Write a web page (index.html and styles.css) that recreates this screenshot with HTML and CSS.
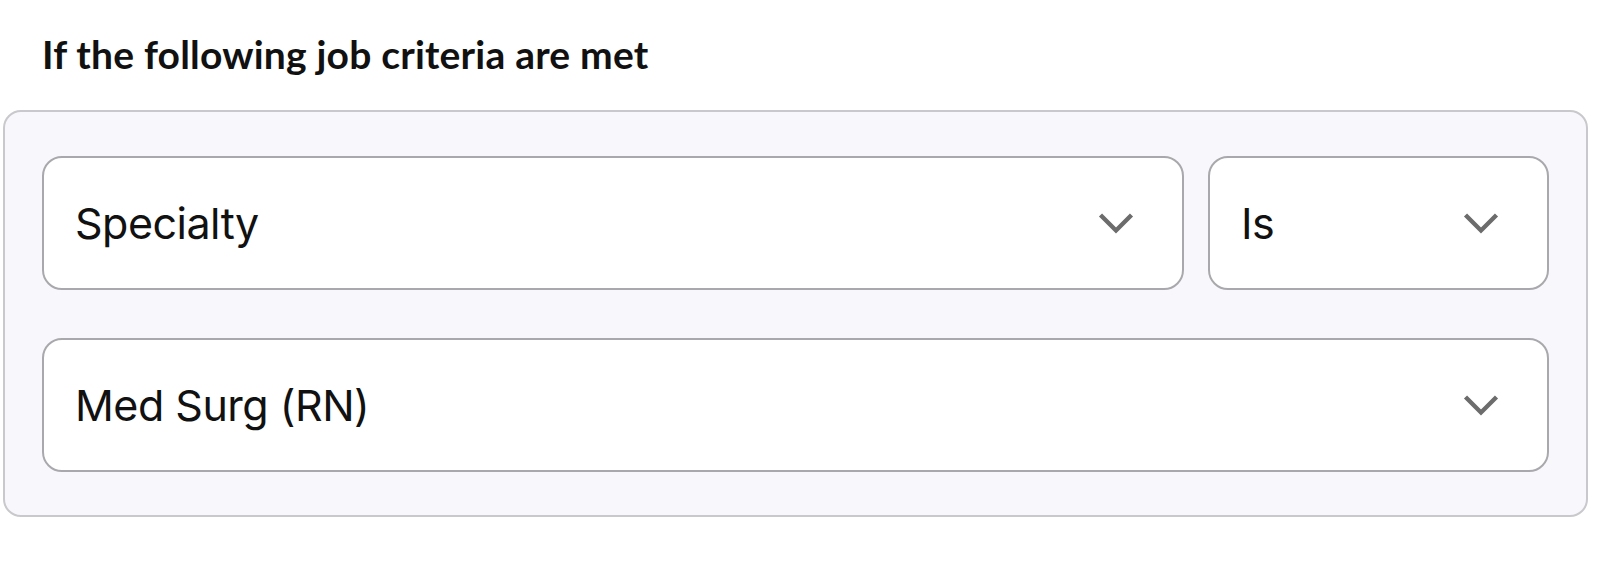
FILE: index.html
```html
<!DOCTYPE html>
<html lang="en">
<head>
<meta charset="utf-8">
<title>Job criteria</title>
<link rel="stylesheet" href="styles.css">
</head>
<body>
<div class="page">
  <h2 class="heading">If the following job criteria are met</h2>
  <div class="panel">
    <div class="row">
      <div class="select grow">
        <span class="value">Specialty</span>
        <svg class="chev" width="36" height="22" viewBox="0 0 36 22"><polyline points="2.5,3 18,18.5 33.5,3" fill="none" stroke="#6c6c6c" stroke-width="4.4"/></svg>
      </div>
      <div class="select op">
        <span class="value">Is</span>
        <svg class="chev" width="36" height="22" viewBox="0 0 36 22"><polyline points="2.5,3 18,18.5 33.5,3" fill="none" stroke="#6c6c6c" stroke-width="4.4"/></svg>
      </div>
    </div>
    <div class="row">
      <div class="select grow">
        <span class="value">Med Surg (RN)</span>
        <svg class="chev" width="36" height="22" viewBox="0 0 36 22"><polyline points="2.5,3 18,18.5 33.5,3" fill="none" stroke="#6c6c6c" stroke-width="4.4"/></svg>
      </div>
    </div>
  </div>
</div>
</body>
</html>
```
FILE: styles.css
```css
* { box-sizing: border-box; }
html, body { margin: 0; padding: 0; background: #ffffff; }
.page {
  padding: 30px 12px 0 3px;
}
.heading {
  margin: 0 0 32px 0;
  padding-left: 39px;
  font-family: "Lato", "Liberation Sans", sans-serif;
  font-weight: 700;
  font-size: 39px;
  line-height: 48px;
  color: #111111;
  letter-spacing: 0.2px;
}
.panel {
  border: 2px solid #c9c9cd;
  border-radius: 18px;
  background: #f8f8fc;
  padding: 44px 37px 43px 37px;
  display: flex;
  flex-direction: column;
  gap: 48px;
}
.row {
  display: flex;
  gap: 24px;
}
.select {
  height: 134px;
  border: 2px solid #a9a9ad;
  border-radius: 20px;
  background: #ffffff;
  display: flex;
  align-items: center;
  justify-content: space-between;
  padding: 0 48px 0 31px;
}
.grow { flex: 1; }
.op { width: 341px; flex: none; }
.value {
  font-family: "Inter", "Liberation Sans", sans-serif;
  font-size: 43px;
  color: #111111;
  letter-spacing: -0.5px;
}
.chev { display: block; }
```
